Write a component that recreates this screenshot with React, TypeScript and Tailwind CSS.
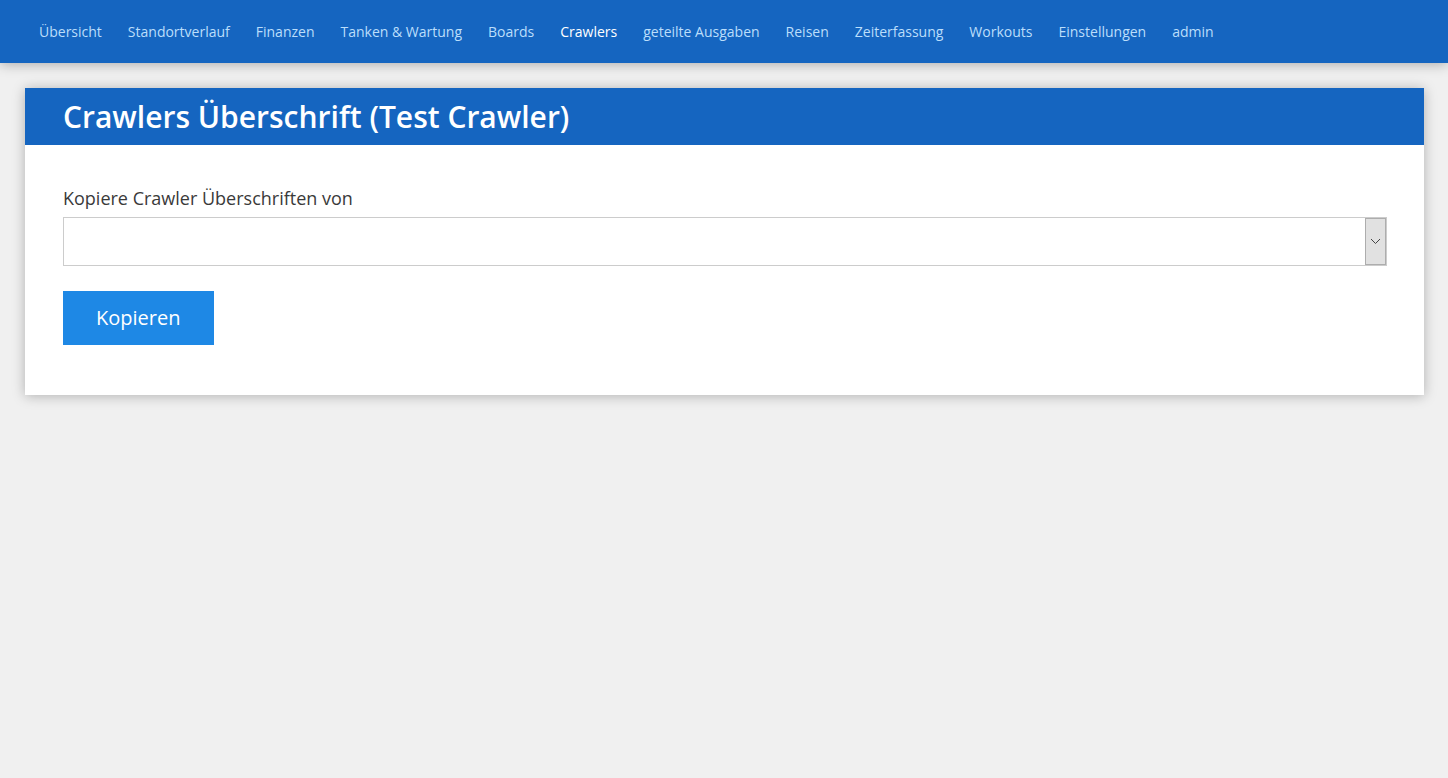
const items = [
  'Übersicht', 'Standortverlauf', 'Finanzen', 'Tanken & Wartung', 'Boards', 'Crawlers',
  'geteilte Ausgaben', 'Reisen', 'Zeiterfassung', 'Workouts', 'Einstellungen', 'admin',
];

function Navigation() {
  return (
    <header className="bg-[#1565c0] px-[39px] py-5 shadow-[0_1px_12px_rgba(0,0,0,0.3)]">
      <nav>
        <ul className="flex flex-wrap gap-x-[26px]">
          {items.map((item) => (
            <li key={item}>
              <a
                href="#"
                aria-current={item === 'Crawlers' ? 'page' : undefined}
                className="block text-[14px] leading-[23px] text-[#bbdefb] aria-[current=page]:text-white"
              >
                {item}
              </a>
            </li>
          ))}
        </ul>
      </nav>
    </header>
  );
}

function CopyForm() {
  return (
    <form className="pt-10 pr-[37px] pb-[50px] pl-[38px]" onSubmit={(e) => e.preventDefault()}>
      <label htmlFor="source" className="block text-[18px] leading-[27px] text-[#3a3a3a]">
        Kopiere Crawler Überschriften von
      </label>
      <div className="mt-[5px] grid">
        <select
          id="source"
          className="col-start-1 row-start-1 h-[49px] w-full appearance-none border border-[#ccc] bg-white px-3 text-[18px]"
        >
          <option value=""></option>
        </select>
        <span className="pointer-events-none col-start-1 row-start-1 m-px flex w-[21px] items-center justify-center justify-self-end border border-[#adadad] bg-[#e1e1e1]">
          <svg width="11" height="7" viewBox="0 0 11 7" fill="none" stroke="#444" aria-hidden="true">
            <path d="M1 1 L5.5 5.5 L10 1" />
          </svg>
        </span>
      </div>
      <button type="submit" className="mt-[25px] h-[54px] bg-[#1e88e5] pr-[34px] pl-[33px] text-[20px] text-white">
        Kopieren
      </button>
    </form>
  );
}

export default function App() {
  return (
    <div className="min-h-screen bg-[#f0f0f0] font-['Open_Sans',sans-serif]">
      <Navigation />
      <main className="py-[25px] pr-6 pl-[25px]">
        <section className="bg-white shadow-[0_1px_12px_rgba(0,0,0,0.27)]">
          <h1 className="bg-[#1565c0] px-[38px] py-2 text-[30px] leading-[41px] font-semibold text-white">
            Crawlers Überschrift (Test Crawler)
          </h1>
          <CopyForm />
        </section>
      </main>
    </div>
  );
}
